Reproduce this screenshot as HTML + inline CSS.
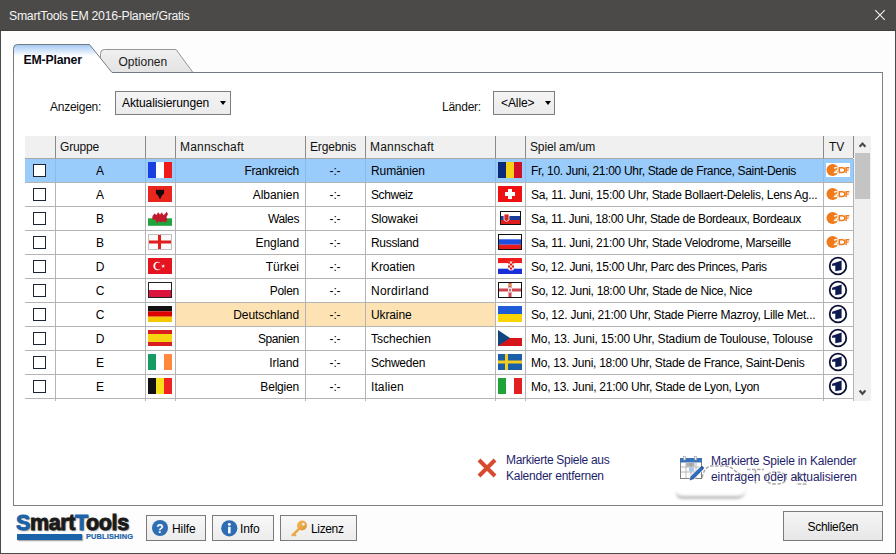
<!DOCTYPE html>
<html><head><meta charset="utf-8">
<style>
*{box-sizing:border-box;margin:0;padding:0}
html,body{width:896px;height:554px;overflow:hidden;background:#fdfdfd}
body{position:relative;font-family:"Liberation Sans",sans-serif;font-size:12px;color:#000}
.abs{position:absolute}
#win{position:absolute;left:0;top:0;width:896px;height:554px;border:1px solid #4b4a48;border-top:none;background:#fdfdfd}
#title{position:absolute;left:0;top:0;width:896px;height:31px;background:#4b4a48;box-shadow:inset 0 -1px 0 #41403e}
#title .t{position:absolute;left:9px;top:9px;color:#f4f4f4;font-size:12.3px;line-height:14px;letter-spacing:-0.3px}
#close{position:absolute;left:874px;top:9px;width:12px;height:12px}
#panel{position:absolute;left:13px;top:72px;width:870px;height:434px;border:1px solid #808080;background:#fff}
.tabtxt{position:absolute;line-height:14px}
.lbl{position:absolute;line-height:14px;letter-spacing:-0.25px;color:#111}
.combo{position:absolute;border:1px solid #7d7d7d;background:linear-gradient(#f4f4f4,#ebebeb)}
.combo .tx{position:absolute;left:6px;top:4px;line-height:14px;font-size:12px;letter-spacing:-0.1px;color:#000}
.combo .ar{position:absolute;width:0;height:0;border-left:3.5px solid transparent;border-right:3.5px solid transparent;border-top:4.5px solid #000}
.hdr{position:absolute;left:25px;top:136px;width:828px;height:22px;background:#f0f0f0}
.hdr .h{position:absolute;top:0;line-height:22px;color:#111;letter-spacing:-0.15px}
.hline{position:absolute;left:25px;width:828px;height:1px;background:#b4b4b4}
.vline{position:absolute;top:182px;width:1px;height:219px;background:#b4b4b4}
.hvline{position:absolute;top:136px;width:1px;height:22px;background:#8a8a8a}
.vsel{position:absolute;top:159px;width:1px;height:23px;background:#8cbbe6}
.hb{position:absolute;left:25px;top:158px;width:828px;height:1px;background:#a8a8a8}
.row{position:absolute;left:25px;width:828px;height:23px}
.row.sel{background:#99cbfb}
.hl{position:absolute;top:0;height:23px;background:#fde3b4}
.cb{position:absolute;left:8px;top:5px;width:13px;height:13px;border:1.4px solid #1c2430;background:#fff}
.c{position:absolute;top:1px;line-height:23px;white-space:nowrap;color:#000;letter-spacing:-0.15px}
.g{left:30px;width:90px;text-align:center}
.m1{left:150px;width:124px;text-align:right}
.erg{left:280px;width:60px;text-align:center}
.m2{left:346px}
.sp{left:506px;letter-spacing:-0.35px}
.flag{position:absolute;top:3px}
.tv{position:absolute}
.zdf{left:800px;top:3px;width:26px;height:16px}
.ard{left:801px;top:-1px;width:24px;height:24px}
#sb{position:absolute;left:854px;top:136px;width:17px;height:265px;background:#f0f0f0}
#thumb{position:absolute;left:855px;top:153px;width:15px;height:46px;background:#c4c4c4}
.btn{position:absolute;border:1px solid #7a7a7a;background:linear-gradient(#f8f8f8,#ececec)}
.btn .tx{position:absolute;line-height:14px;font-size:12px;letter-spacing:-0.1px}
.link{position:absolute;color:#1e1e6a;line-height:16px;font-size:12px}
</style></head><body>
<div id="win"></div>
<div id="title"><div class="t">SmartTools EM 2016-Planer/Gratis</div>
<svg id="close" width="12" height="12" viewBox="0 0 12 12"><path d="M1.2,1.2 L10.8,10.8 M10.8,1.2 L1.2,10.8" stroke="#f2f2f2" stroke-width="1.1"/></svg>
</div>

<div id="panel"></div>
<svg class="abs" style="left:0;top:40px" width="896" height="40" viewBox="0 40 896 40">
 <defs>
  <linearGradient id="tg2" x1="0" y1="44" x2="0" y2="73" gradientUnits="userSpaceOnUse"><stop offset="0" stop-color="#9fc6f2"/><stop offset="0.42" stop-color="#ffffff"/><stop offset="1" stop-color="#ffffff"/></linearGradient>
  <linearGradient id="ig2" x1="0" y1="49" x2="0" y2="73" gradientUnits="userSpaceOnUse"><stop offset="0" stop-color="#f0f0f0"/><stop offset="1" stop-color="#e3e3e3"/></linearGradient>
 </defs>
 <path d="M100.5,72.5 L100.5,53.5 Q100.5,49.5 104.5,49.5 L176,49.5 L193,72.5 Z" fill="url(#ig2)" stroke="#959595" stroke-width="1"/>
 <path d="M13.5,75 L13.5,48.5 Q13.5,44.5 17.5,44.5 L89.5,44.5 L112,72 L112,75 Z" fill="url(#tg2)"/>
 <path d="M13.5,75 L13.5,48.5 Q13.5,44.5 17.5,44.5 L89.5,44.5 L112,72.5 L883,72.5" fill="none" stroke="#737a82" stroke-width="1"/>
</svg>
<div class="tabtxt" style="left:23.5px;top:53px;font-weight:bold;font-size:12.3px;letter-spacing:-0.2px;color:#0a0a14">EM-Planer</div>
<div class="tabtxt" style="left:118.5px;top:55px;font-size:12px;letter-spacing:0px;color:#1a1a1a">Optionen</div>

<div class="lbl" style="left:50px;top:99.5px">Anzeigen:</div>
<div class="combo" style="left:115px;top:91px;width:116px;height:24px"><div class="tx">Aktualisierungen</div><div class="ar" style="left:104px;top:9px"></div></div>
<div class="lbl" style="left:442px;top:99.5px">Länder:</div>
<div class="combo" style="left:493px;top:91px;width:62px;height:24px"><div class="tx" style="left:7px">&lt;Alle&gt;</div><div class="ar" style="left:51px;top:9px"></div></div>

<!-- grid -->
<div class="hdr">
 <div class="h" style="left:35px">Gruppe</div>
 <div class="h" style="left:155px;letter-spacing:0.2px">Mannschaft</div>
 <div class="h" style="left:285px">Ergebnis</div>
 <div class="h" style="left:345px;letter-spacing:0.2px">Mannschaft</div>
 <div class="h" style="left:505px">Spiel am/um</div>
 <div class="h" style="left:804px">TV</div>
</div>
<div class="hb"></div>
<div class="row sel" style="top:159px"><div class="cb"></div><div class="c g">A</div><svg class="flag" style="left:123px" width="24" height="16" viewBox="0 0 24 16"><rect width="8" height="16" fill="#1a3fe0"/><rect x="8" width="8" height="16" fill="#fff"/><rect x="16" width="8" height="16" fill="#ef1a1a"/></svg><div class="c m1" style="letter-spacing:-0.211px">Frankreich</div><div class="c erg">-:-</div><div class="c m2" style="letter-spacing:-0.100px">Rumänien</div><svg class="flag" style="left:473px" width="24" height="16" viewBox="0 0 24 16"><rect width="8" height="16" fill="#0c2a7a"/><rect x="8" width="8" height="16" fill="#f7d117"/><rect x="16" width="8" height="16" fill="#d0102a"/></svg><div class="c sp" style="letter-spacing:-0.323px">Fr, 10. Juni, 21:00 Uhr, Stade de France, Saint-Denis</div><div class="tv zdf"><svg width="26" height="16" viewBox="0 0 26 16"><rect x="1" y="1" width="24" height="14" fill="#fff"/><circle cx="7.6" cy="8" r="6.1" fill="#f07a1a"/><path d="M9.2,6.4 Q10.3,5.4 11.8,5.6 Q13.3,5.9 12.9,7.6 Q12.5,8.5 10.3,9.5 L9.6,10.5 H13.6" fill="none" stroke="#fdf0dc" stroke-width="1.45"/><path d="M14.4,5.7 H17.4 Q19.8,5.7 19.8,8.1 Q19.8,10.5 17.4,10.5 H14.4 Z" fill="none" stroke="#f07a1a" stroke-width="1.45"/><path d="M24.4,5.7 H21.1 V10.9 M21.1,8.1 H23.8" fill="none" stroke="#f07a1a" stroke-width="1.45"/></svg></div></div>
<div class="row" style="top:183px"><div class="cb"></div><div class="c g">A</div><svg class="flag" style="left:123px" width="24" height="16" viewBox="0 0 24 16"><rect width="24" height="16" fill="#e8261e"/><path d="M8.3,3.3 L10.3,4.3 L12,3.6 L13.7,4.3 L15.7,3.3 L16.2,6 Q16.2,8.8 13.6,9.8 L12.8,12.6 L11.2,12.6 L10.4,9.8 Q7.8,8.8 7.8,6 Z" fill="#160808"/></svg><div class="c m1" style="letter-spacing:-0.057px">Albanien</div><div class="c erg">-:-</div><div class="c m2" style="letter-spacing:-0.400px">Schweiz</div><svg class="flag" style="left:473px" width="24" height="16" viewBox="0 0 24 16"><rect width="24" height="16" fill="#ee1111"/><rect x="10" y="3" width="4" height="10" fill="#fff"/><rect x="7" y="6" width="10" height="4" fill="#fff"/></svg><div class="c sp" style="letter-spacing:-0.288px">Sa, 11. Juni, 15:00 Uhr, Stade Bollaert-Delelis, Lens Ag...</div><div class="tv zdf"><svg width="26" height="16" viewBox="0 0 26 16"><circle cx="7.6" cy="8" r="6.1" fill="#f07a1a"/><path d="M9.2,6.4 Q10.3,5.4 11.8,5.6 Q13.3,5.9 12.9,7.6 Q12.5,8.5 10.3,9.5 L9.6,10.5 H13.6" fill="none" stroke="#fdf0dc" stroke-width="1.45"/><path d="M14.4,5.7 H17.4 Q19.8,5.7 19.8,8.1 Q19.8,10.5 17.4,10.5 H14.4 Z" fill="none" stroke="#f07a1a" stroke-width="1.45"/><path d="M24.4,5.7 H21.1 V10.9 M21.1,8.1 H23.8" fill="none" stroke="#f07a1a" stroke-width="1.45"/></svg></div></div>
<div class="row" style="top:207px"><div class="cb"></div><div class="c g">B</div><svg class="flag" style="left:123px" width="24" height="16" viewBox="0 0 24 16"><rect y="8" width="24" height="8" fill="#fff"/><rect y="8.3" width="24" height="7.5" fill="#1fa33a"/><path d="M4.5,6 L6.5,3.5 L8.5,5 L10,2.3 L12,4.5 L14,2.3 L15.2,5 L17,4 L18.6,1.8 L20,4 L18.5,7 L19.2,10 L17.2,12.8 L15.6,11.2 L13,12.2 L11,11.2 L8.6,13.2 L8,10.6 L6,9.2 L4.2,9.6 Z" fill="#c21a2c"/></svg><div class="c m1" style="letter-spacing:-0.400px">Wales</div><div class="c erg">-:-</div><div class="c m2" style="letter-spacing:-0.157px">Slowakei</div><svg class="flag" style="left:475px;top:4px" width="21" height="14" viewBox="0 0 21 14"><rect x="1" y="1" width="19" height="4" fill="#fff"/><rect x="1" y="5" width="19" height="4" fill="#1a3c9a"/><rect x="1" y="9" width="19" height="4" fill="#e21d1d"/><path d="M4,3 L9,3 L9,9 Q6.5,12 4,9 Z" fill="#d22" stroke="#fff" stroke-width="0.8"/><rect x="0.5" y="0.5" width="20" height="13" fill="none" stroke="#111" stroke-width="1"/></svg><div class="c sp" style="letter-spacing:-0.359px">Sa, 11. Juni, 18:00 Uhr, Stade de Bordeaux, Bordeaux</div><div class="tv zdf"><svg width="26" height="16" viewBox="0 0 26 16"><circle cx="7.6" cy="8" r="6.1" fill="#f07a1a"/><path d="M9.2,6.4 Q10.3,5.4 11.8,5.6 Q13.3,5.9 12.9,7.6 Q12.5,8.5 10.3,9.5 L9.6,10.5 H13.6" fill="none" stroke="#fdf0dc" stroke-width="1.45"/><path d="M14.4,5.7 H17.4 Q19.8,5.7 19.8,8.1 Q19.8,10.5 17.4,10.5 H14.4 Z" fill="none" stroke="#f07a1a" stroke-width="1.45"/><path d="M24.4,5.7 H21.1 V10.9 M21.1,8.1 H23.8" fill="none" stroke="#f07a1a" stroke-width="1.45"/></svg></div></div>
<div class="row" style="top:231px"><div class="cb"></div><div class="c g">B</div><svg class="flag" style="left:123px" width="24" height="16" viewBox="0 0 24 16"><rect width="24" height="16" fill="#fafafa"/><rect x="10" width="3" height="16" fill="#e21d1d"/><rect y="6.5" width="24" height="3" fill="#e21d1d"/><rect x="0.5" y="0.5" width="23" height="15" fill="none" stroke="#c0c0c0" stroke-width="1"/></svg><div class="c m1" style="letter-spacing:-0.083px">England</div><div class="c erg">-:-</div><div class="c m2" style="letter-spacing:-0.314px">Russland</div><svg class="flag" style="left:473px" width="24" height="16" viewBox="0 0 24 16"><rect width="24" height="5.3" fill="#fff"/><rect y="5.3" width="24" height="5.4" fill="#1f4fe0"/><rect y="10.7" width="24" height="5.3" fill="#e81a1a"/><rect x="0.5" y="0.5" width="23" height="15" fill="none" stroke="#111" stroke-width="1"/></svg><div class="c sp" style="letter-spacing:-0.288px">Sa, 11. Juni, 21:00 Uhr, Stade Velodrome, Marseille</div><div class="tv zdf"><svg width="26" height="16" viewBox="0 0 26 16"><circle cx="7.6" cy="8" r="6.1" fill="#f07a1a"/><path d="M9.2,6.4 Q10.3,5.4 11.8,5.6 Q13.3,5.9 12.9,7.6 Q12.5,8.5 10.3,9.5 L9.6,10.5 H13.6" fill="none" stroke="#fdf0dc" stroke-width="1.45"/><path d="M14.4,5.7 H17.4 Q19.8,5.7 19.8,8.1 Q19.8,10.5 17.4,10.5 H14.4 Z" fill="none" stroke="#f07a1a" stroke-width="1.45"/><path d="M24.4,5.7 H21.1 V10.9 M21.1,8.1 H23.8" fill="none" stroke="#f07a1a" stroke-width="1.45"/></svg></div></div>
<div class="row" style="top:255px"><div class="cb"></div><div class="c g">D</div><svg class="flag" style="left:123px" width="24" height="16" viewBox="0 0 24 16"><rect width="24" height="16" fill="#e5141e"/><circle cx="9.5" cy="8" r="4.2" fill="#fff"/><circle cx="10.6" cy="8" r="3.4" fill="#e5141e"/><path d="M15.2,6.3 L15.7,7.6 L17,7.6 L16,8.4 L16.4,9.7 L15.2,8.9 L14,9.7 L14.4,8.4 L13.4,7.6 L14.7,7.6 Z" fill="#fff"/></svg><div class="c m1" style="letter-spacing:-0.020px">Türkei</div><div class="c erg">-:-</div><div class="c m2" style="letter-spacing:-0.100px">Kroatien</div><svg class="flag" style="left:473px" width="24" height="16" viewBox="0 0 24 16"><rect width="24" height="5.3" fill="#f01c1c"/><rect y="5.3" width="24" height="5.4" fill="#fff"/><rect y="10.7" width="24" height="5.3" fill="#1a2fd8"/><path d="M10,3.5 H16 V10.5 Q16,12.5 13,12.5 Q10,12.5 10,10.5 Z" fill="#f6dede"/><rect x="10" y="3.5" width="2" height="2" fill="#e01818"/><rect x="14" y="3.5" width="2" height="2" fill="#e01818"/><rect x="12" y="5.5" width="2" height="2" fill="#e01818"/><rect x="10" y="7.5" width="2" height="2" fill="#e01818"/><rect x="14" y="7.5" width="2" height="2" fill="#e01818"/><rect x="12" y="9.5" width="2" height="2" fill="#e01818"/></svg><div class="c sp" style="letter-spacing:-0.370px">So, 12. Juni, 15:00 Uhr, Parc des Princes, Paris</div><div class="tv ard"><svg width="24" height="24" viewBox="0 0 24 24"><circle cx="12" cy="12" r="8.3" fill="#fff" stroke="#0d0f33" stroke-width="1.8"/><path d="M6.1,9.8 L15.6,6.5 L15.6,16 L9.3,17.3 L9.3,11.6 L6.2,11.9 Z" fill="#0d1a50"/></svg></div></div>
<div class="row" style="top:279px"><div class="cb"></div><div class="c g">C</div><svg class="flag" style="left:123px" width="24" height="16" viewBox="0 0 24 16"><rect width="24" height="8" fill="#fff"/><rect y="8" width="24" height="8" fill="#dc143c"/><rect x="0.5" y="0.5" width="23" height="15" fill="none" stroke="#222" stroke-width="1"/></svg><div class="c m1" style="letter-spacing:-0.300px">Polen</div><div class="c erg">-:-</div><div class="c m2" style="letter-spacing:0.256px">Nordirland</div><svg class="flag" style="left:473px" width="24" height="16" viewBox="0 0 24 16"><rect width="24" height="16" fill="#fff"/><rect x="10.5" width="3" height="16" fill="#c8303a" opacity="0.9"/><rect y="6.5" width="24" height="3" fill="#c8303a" opacity="0.9"/><path d="M12,5 L14,6.5 L14,9.5 L12,11 L10,9.5 L10,6.5 Z" fill="#f4f4f4"/><rect x="11.3" y="6.8" width="1.4" height="2.6" fill="#c8303a"/><rect x="10.8" y="1.8" width="2.4" height="2.4" rx="0.8" fill="#e0a040"/><rect x="0.5" y="0.5" width="23" height="15" fill="none" stroke="#111" stroke-width="1"/></svg><div class="c sp" style="letter-spacing:-0.314px">So, 12. Juni, 18:00 Uhr, Stade de Nice, Nice</div><div class="tv ard"><svg width="24" height="24" viewBox="0 0 24 24"><circle cx="12" cy="12" r="8.3" fill="#fff" stroke="#0d0f33" stroke-width="1.8"/><path d="M6.1,9.8 L15.6,6.5 L15.6,16 L9.3,17.3 L9.3,11.6 L6.2,11.9 Z" fill="#0d1a50"/></svg></div></div>
<div class="row" style="top:303px"><div class="hl" style="left:151px;width:319px"></div><div class="cb"></div><div class="c g">C</div><svg class="flag" style="left:123px" width="24" height="16" viewBox="0 0 24 16"><rect width="24" height="5.3" fill="#111"/><rect y="5.3" width="24" height="5.4" fill="#dd0000"/><rect y="10.7" width="24" height="5.3" fill="#f5c800"/></svg><div class="c m1" style="letter-spacing:-0.090px">Deutschland</div><div class="c erg">-:-</div><div class="c m2" style="letter-spacing:-0.117px">Ukraine</div><svg class="flag" style="left:473px" width="24" height="16" viewBox="0 0 24 16"><rect width="24" height="8" fill="#1f5bd6"/><rect y="8" width="24" height="8" fill="#fad400"/></svg><div class="c sp" style="letter-spacing:-0.246px">So, 12. Juni, 21:00 Uhr, Stade Pierre Mazroy, Lille Met...</div><div class="tv ard"><svg width="24" height="24" viewBox="0 0 24 24"><circle cx="12" cy="12" r="8.3" fill="#fff" stroke="#0d0f33" stroke-width="1.8"/><path d="M6.1,9.8 L15.6,6.5 L15.6,16 L9.3,17.3 L9.3,11.6 L6.2,11.9 Z" fill="#0d1a50"/></svg></div></div>
<div class="row" style="top:327px"><div class="cb"></div><div class="c g">D</div><svg class="flag" style="left:123px" width="24" height="16" viewBox="0 0 24 16"><rect width="24" height="16" fill="#d81e1e"/><rect y="4" width="24" height="8" fill="#f7d511"/></svg><div class="c m1" style="letter-spacing:-0.417px">Spanien</div><div class="c erg">-:-</div><div class="c m2" style="letter-spacing:-0.011px">Tschechien</div><svg class="flag" style="left:473px" width="24" height="16" viewBox="0 0 24 16"><rect width="24" height="8" fill="#fff"/><rect y="8" width="24" height="8" fill="#d7141a"/><path d="M0,0 L12,8 L0,16 Z" fill="#11457e"/></svg><div class="c sp" style="letter-spacing:-0.165px">Mo, 13. Juni, 15:00 Uhr, Stadium de Toulouse, Tolouse</div><div class="tv ard"><svg width="24" height="24" viewBox="0 0 24 24"><circle cx="12" cy="12" r="8.3" fill="#fff" stroke="#0d0f33" stroke-width="1.8"/><path d="M6.1,9.8 L15.6,6.5 L15.6,16 L9.3,17.3 L9.3,11.6 L6.2,11.9 Z" fill="#0d1a50"/></svg></div></div>
<div class="row" style="top:351px"><div class="cb"></div><div class="c g">E</div><svg class="flag" style="left:123px" width="24" height="16" viewBox="0 0 24 16"><rect width="8" height="16" fill="#169b62"/><rect x="8" width="8" height="16" fill="#fff"/><rect x="16" width="8" height="16" fill="#ff883e"/></svg><div class="c m1" style="letter-spacing:-0.040px">Irland</div><div class="c erg">-:-</div><div class="c m2" style="letter-spacing:-0.243px">Schweden</div><svg class="flag" style="left:473px" width="24" height="16" viewBox="0 0 24 16"><rect width="24" height="16" fill="#1a60a8"/><rect x="7" width="3" height="16" fill="#f5cc1f"/><rect y="6.5" width="24" height="3" fill="#f5cc1f"/></svg><div class="c sp" style="letter-spacing:-0.279px">Mo, 13. Juni, 18:00 Uhr, Stade de France, Saint-Denis</div><div class="tv ard"><svg width="24" height="24" viewBox="0 0 24 24"><circle cx="12" cy="12" r="8.3" fill="#fff" stroke="#0d0f33" stroke-width="1.8"/><path d="M6.1,9.8 L15.6,6.5 L15.6,16 L9.3,17.3 L9.3,11.6 L6.2,11.9 Z" fill="#0d1a50"/></svg></div></div>
<div class="row" style="top:375px"><div class="cb"></div><div class="c g">E</div><svg class="flag" style="left:123px" width="24" height="16" viewBox="0 0 24 16"><rect width="8" height="16" fill="#111"/><rect x="8" width="8" height="16" fill="#f7e01a"/><rect x="16" width="8" height="16" fill="#ee2222"/></svg><div class="c m1" style="letter-spacing:-0.200px">Belgien</div><div class="c erg">-:-</div><div class="c m2" style="letter-spacing:0.100px">Italien</div><svg class="flag" style="left:473px" width="24" height="16" viewBox="0 0 24 16"><rect width="8" height="16" fill="#1ea33a"/><rect x="8" width="8" height="16" fill="#fff"/><rect x="16" width="8" height="16" fill="#e02020"/></svg><div class="c sp" style="letter-spacing:-0.265px">Mo, 13. Juni, 21:00 Uhr, Stade de Lyon, Lyon</div><div class="tv ard"><svg width="24" height="24" viewBox="0 0 24 24"><circle cx="12" cy="12" r="8.3" fill="#fff" stroke="#0d0f33" stroke-width="1.8"/><path d="M6.1,9.8 L15.6,6.5 L15.6,16 L9.3,17.3 L9.3,11.6 L6.2,11.9 Z" fill="#0d1a50"/></svg></div></div>
<div class="hline" style="top:182px"></div>
<div class="hline" style="top:206px"></div>
<div class="hline" style="top:230px"></div>
<div class="hline" style="top:254px"></div>
<div class="hline" style="top:278px"></div>
<div class="hline" style="top:302px"></div>
<div class="hline" style="top:326px"></div>
<div class="hline" style="top:350px"></div>
<div class="hline" style="top:374px"></div>
<div class="hline" style="top:398px"></div>
<div class="vline" style="left:55px"></div>
<div class="vsel" style="left:55px"></div>
<div class="vline" style="left:145px"></div>
<div class="vsel" style="left:145px"></div>
<div class="vline" style="left:175px"></div>
<div class="vsel" style="left:175px"></div>
<div class="vline" style="left:305px"></div>
<div class="vsel" style="left:305px"></div>
<div class="vline" style="left:365px"></div>
<div class="vsel" style="left:365px"></div>
<div class="vline" style="left:495px"></div>
<div class="vsel" style="left:495px"></div>
<div class="vline" style="left:525px"></div>
<div class="vsel" style="left:525px"></div>
<div class="vline" style="left:823px"></div>
<div class="vsel" style="left:823px"></div>
<div class="vline" style="left:853px"></div>
<div class="vsel" style="left:853px"></div>
<div class="hvline" style="left:55px"></div>
<div class="hvline" style="left:145px"></div>
<div class="hvline" style="left:175px"></div>
<div class="hvline" style="left:305px"></div>
<div class="hvline" style="left:365px"></div>
<div class="hvline" style="left:495px"></div>
<div class="hvline" style="left:525px"></div>
<div class="hvline" style="left:823px"></div>
<div class="hvline" style="left:853px"></div>
<div id="sb"></div>
<div id="thumb"></div>
<svg class="abs" style="left:856px;top:139px" width="12" height="10" viewBox="0 0 12 10"><path d="M3.6,7.8 L6.5,4.6 L9.4,7.8" fill="none" stroke="#4a4a4a" stroke-width="2.2"/></svg>
<svg class="abs" style="left:856px;top:387px" width="12" height="10" viewBox="0 0 12 10"><path d="M3.6,3.6 L6.5,6.8 L9.4,3.6" fill="none" stroke="#4a4a4a" stroke-width="2.2"/></svg>

<!-- commands -->
<svg class="abs" style="left:476px;top:457px" width="22" height="22" viewBox="0 0 22 22"><path d="M3,3 L19,19 M19,3 L3,19" stroke="#d64a2e" stroke-width="4"/></svg>
<div class="link" style="left:506px;top:452px"><span style="letter-spacing:-0.3px">Markierte Spiele aus</span><br><span style="letter-spacing:-0.24px">Kalender entfernen</span></div>

<!-- watermark -->
<svg class="abs" style="left:670px;top:455px" width="160" height="50" viewBox="670 455 160 50">
 <defs><filter id="bl" x="-20%" y="-80%" width="140%" height="260%"><feGaussianBlur stdDeviation="1.5"/></filter></defs>
 <path d="M676,491 Q676,496 684,496 L738,496 Q746,496 746,488 L746,491 Q744,499 736,499 L684,499 Q676,499 676,493 Z" fill="#8c8c8c" opacity="0.6" filter="url(#bl)"/>
 <g fill="none" stroke="#9a9a9a" stroke-width="1.5" stroke-dasharray="3.5 1.5" opacity="0.85">
  <path d="M702,478 Q704,468 710,466 L724,466 Q730,466 734,470 L741,475"/>
  <path d="M747,469.5 H764 M755.5,470 V484.5"/>
  <path d="M766,479 Q766,472 776,472 Q786,472 786,478 Q786,484 776,484 Q768,484 766,480"/>
  <path d="M806,475 Q796,473 796,477 Q797,480 802,480 Q808,481 806,484 L796,484"/>
 </g>
</svg>
<svg class="abs" style="left:678px;top:455px" width="28" height="28" viewBox="0 0 28 28">
 <rect x="2.5" y="6.5" width="21" height="17" fill="#fff" stroke="#808080" stroke-width="1"/>
 <rect x="2" y="3" width="22" height="4.5" fill="#3b73b9"/>
 <rect x="5.5" y="1.5" width="2.2" height="3.5" fill="#f2f2f2" stroke="#8a8a8a" stroke-width="0.5"/><rect x="16.5" y="1.5" width="2.2" height="3.5" fill="#f2f2f2" stroke="#8a8a8a" stroke-width="0.5"/>
 <path d="M3,12 H23 M3,17 H23 M8,7.5 V23.5 M13,7.5 V23.5 M18,7.5 V23.5" stroke="#b8b8b8" stroke-width="1"/>
 <rect x="8.5" y="8" width="8" height="3.5" fill="#7a7a7a" opacity="0.6"/><rect x="11" y="12.5" width="5" height="4" fill="#a9c7ea"/>
 <path d="M11,26 L12.5,21 L22.5,11 L26,14.5 L16,24.5 Z" fill="#fff"/>
 <path d="M12,25 L13.2,21.3 L22.5,12.2 L24.8,14.5 L15.6,23.7 Z" fill="#2c6cc0" stroke="#1d3f7a" stroke-width="0.6"/>
 <path d="M22.5,12.2 L24,10.8 L26.2,13 L24.8,14.5 Z" fill="#1d4f96"/>
</svg>
<div class="link" style="left:711px;top:453px"><span style="letter-spacing:-0.19px">Markierte Spiele in Kalender</span><br><span style="letter-spacing:-0.08px">eintragen oder aktualisieren</span></div>

<!-- bottom -->
<div class="abs" style="left:16px;top:511px;font-weight:bold;font-size:21.5px;line-height:24px;letter-spacing:-0.4px;color:#1a1a1a;-webkit-text-stroke:0.9px currentColor;text-shadow:1px 1px 1.5px #888"><span style="color:#1b62a8">S</span>mart<span style="color:#1b62a8">T</span>ools</div>
<div class="abs" style="left:17px;top:534px;width:65px;height:5.5px;background:#1b62a8;box-shadow:1px 1px 1.5px #999"></div>
<div class="abs" style="left:86px;top:532.5px;font-weight:bold;font-size:7.4px;line-height:8px;letter-spacing:0.15px;color:#1b62a8;-webkit-text-stroke:0.2px currentColor">PUBLISHING</div>

<div class="btn" style="left:146px;top:515px;width:60px;height:26px">
 <svg class="abs" style="left:5px;top:4px" width="16" height="16" viewBox="0 0 16 16"><circle cx="8" cy="8" r="8" fill="#2f6db3"/><text x="8" y="12.5" text-anchor="middle" font-family="Liberation Sans" font-weight="bold" font-size="12" fill="#fff">?</text></svg>
 <div class="tx" style="left:25px;top:6px">Hilfe</div></div>
<div class="btn" style="left:212px;top:515px;width:62px;height:26px">
 <svg class="abs" style="left:8px;top:4px" width="17" height="17" viewBox="0 0 17 17"><circle cx="8.3" cy="8.3" r="8.1" fill="#2f6db3"/><rect x="7.1" y="6.8" width="2.5" height="6.6" fill="#fff"/><circle cx="8.35" cy="4.4" r="1.45" fill="#fff"/></svg>
 <div class="tx" style="left:27px;top:6px">Info</div></div>
<div class="btn" style="left:280px;top:515px;width:77px;height:26px">
 <svg class="abs" style="left:8px;top:3px" width="20" height="20" viewBox="0 0 20 20"><defs><linearGradient id="kg" x1="0" y1="0" x2="1" y2="1"><stop offset="0" stop-color="#f3bd5c"/><stop offset="1" stop-color="#dc9430"/></linearGradient></defs>
 <circle cx="13" cy="6.5" r="5" fill="url(#kg)"/><circle cx="14.3" cy="5.2" r="1.3" fill="#f6f6f6"/>
 <path d="M9.8,8.2 L2,16 L3.8,17.8 L5.2,16.4 L6.4,17.6 L7.6,16.4 L6.4,15.2 L11.8,9.8 Z" fill="url(#kg)"/></svg>
 <div class="tx" style="left:30px;top:6px;letter-spacing:-0.35px">Lizenz</div></div>

<div class="btn" style="left:783px;top:511px;width:100px;height:30px;background:linear-gradient(#f5f5f5,#e7e7e7)">
 <div class="tx" style="left:23.5px;top:7.5px;letter-spacing:-0.3px">Schließen</div></div>
</body></html>
